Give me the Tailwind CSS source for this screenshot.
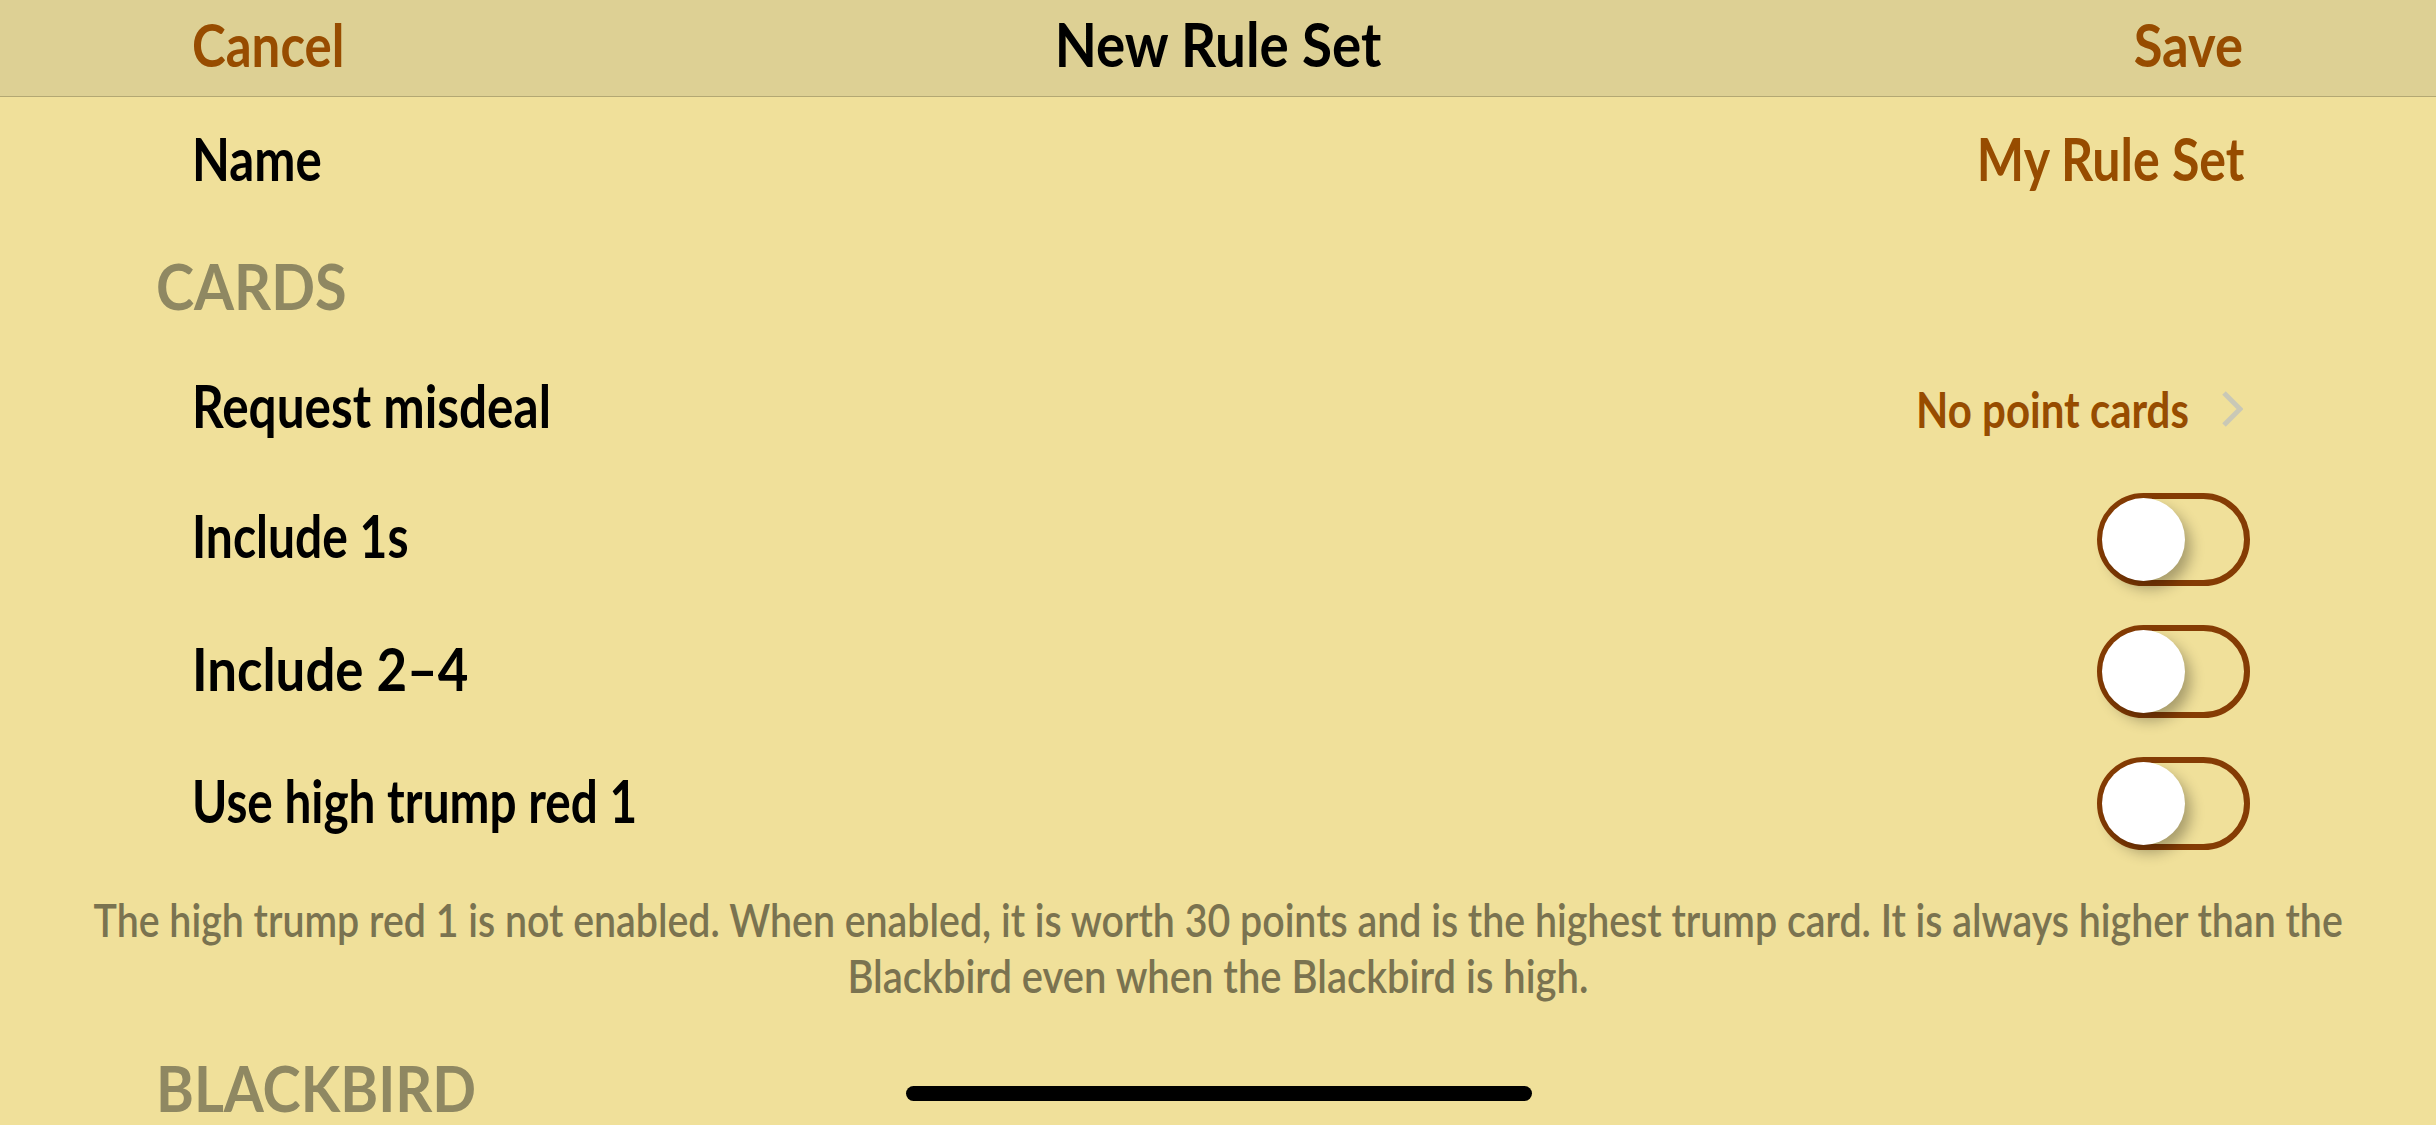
<!DOCTYPE html>
<html lang="en">
<head>
    <meta charset="UTF-8">
    <meta name="viewport" content="width=device-width, initial-scale=1.0">
    <title>New Rule Set</title>
    <script src="https://cdn.jsdelivr.net/npm/@tailwindcss/browser@4"></script>
</head>
<body class="bg-[#f0e09a] h-[1125px] w-[2436px] overflow-hidden relative font-['Lato','Liberation_Sans',sans-serif] font-bold text-black">
    <header class="h-[97px] bg-[#ddd094] border-b border-[#b3a873] flex items-center justify-between pl-[192px] pr-[193px] pb-[9px] relative">
        <span class="text-[60px] text-[#974c00] origin-left scale-x-[0.85]">Cancel</span>
        <span class="text-[62px] absolute left-0 right-0 text-center scale-x-[0.883]">New Rule Set</span>
        <span class="text-[60px] text-[#974c00] origin-right scale-x-[0.875]">Save</span>
    </header>

    <div class="h-[126px] flex items-center justify-between pl-[192px] pr-[192px] pb-[5px] text-[60px]">
        <span class="origin-left scale-x-[0.82]">Name</span>
        <span class="text-[#974c00] origin-right scale-x-[0.835]">My Rule Set</span>
    </div>

    <div class="h-[118px] pl-[156px] pt-[30px] text-[64px] leading-[66px] text-[#8f8862]">
        <span class="inline-block origin-left scale-x-[0.9]">CARDS</span>
    </div>

    <div class="h-[132px] flex items-center justify-between pl-[192px] pr-[193px] pb-[4px] text-[60px]">
        <span class="origin-left scale-x-[0.825]">Request misdeal</span>
        <span class="flex items-center gap-[32px] pt-[8px]">
            <span class="text-[50px] text-[#974c00] origin-right scale-x-[0.84]">No point cards</span>
            <svg class="w-[22px] h-[38px]" viewBox="0 0 22 38" fill="none" stroke="#c9c8b6" stroke-width="5"><path d="M3 3l16 16L3 35"/></svg>
        </span>
    </div>

    <div class="h-[132px] flex items-center justify-between pl-[192px] pr-[186px] text-[60px]">
        <span class="pb-[8px] origin-left scale-x-[0.80]">Include 1s</span>
        <div class="w-[153px] h-[93px] rounded-full border-[6px] border-[#853c04] relative">
            <div class="absolute -left-px -top-px w-[83px] h-[83px] rounded-full bg-white shadow-[6px_8px_14px_rgba(0,0,0,0.3)]"></div>
        </div>
    </div>
    <div class="h-[132px] flex items-center justify-between pl-[192px] pr-[186px] text-[60px]">
        <span class="pb-[6px] origin-left scale-x-[0.88]">Include 2–4</span>
        <div class="w-[153px] h-[93px] rounded-full border-[6px] border-[#853c04] relative">
            <div class="absolute -left-px -top-px w-[83px] h-[83px] rounded-full bg-white shadow-[6px_8px_14px_rgba(0,0,0,0.3)]"></div>
        </div>
    </div>
    <div class="h-[132px] flex items-center justify-between pl-[192px] pr-[186px] text-[60px]">
        <span class="pb-[6px] origin-left scale-x-[0.795]">Use high trump red 1</span>
        <div class="w-[153px] h-[93px] rounded-full border-[6px] border-[#853c04] relative">
            <div class="absolute -left-px -top-px w-[83px] h-[83px] rounded-full bg-white shadow-[6px_8px_14px_rgba(0,0,0,0.3)]"></div>
        </div>
    </div>

    <div class="flex flex-col items-center pt-[22px] text-[47px] leading-[56px] font-semibold text-[#7a7350]">
        <p class="shrink-0 w-max scale-x-[0.836]">The high trump red 1 is not enabled. When enabled, it is worth 30 points and is the highest trump card. It is always higher than the</p>
        <p class="shrink-0 w-max scale-x-[0.85]">Blackbird even when the Blackbird is high.</p>
    </div>

    <div class="pl-[156px] pt-[52px] text-[64px] leading-[66px] text-[#8f8862]">
        <span class="inline-block origin-left scale-x-[0.9]">BLACKBIRD</span>
    </div>

    <div class="absolute left-[906px] top-[1086px] w-[626px] h-[15px] rounded-full bg-black"></div>
</body>
</html>
